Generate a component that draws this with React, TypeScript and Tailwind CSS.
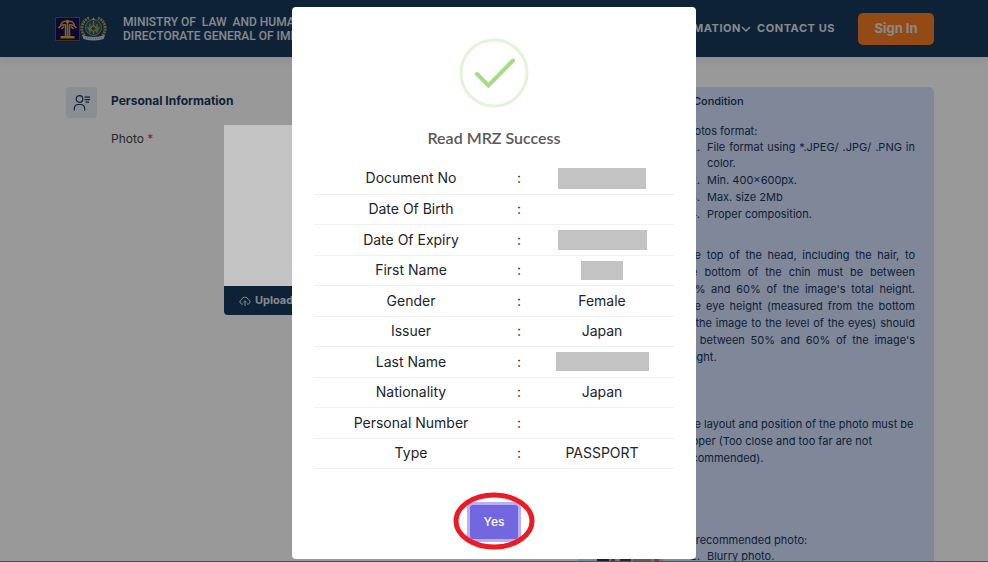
import type { ReactNode } from 'react';

interface MrzField {
  label: string;
  value?: string;
  // size classes of the grey block that hides a private value
  mask?: string;
}

const fields: MrzField[] = [
  { label: 'Document No', mask: 'h-[21px] w-[88px]' },
  { label: 'Date Of Birth' },
  { label: 'Date Of Expiry', mask: 'h-5 w-[89px]' },
  { label: 'First Name', mask: 'h-[19px] w-[42px]' },
  { label: 'Gender', value: 'Female' },
  { label: 'Issuer', value: 'Japan' },
  { label: 'Last Name', mask: 'h-[19px] w-[93px]' },
  { label: 'Nationality', value: 'Japan' },
  { label: 'Personal Number' },
  { label: 'Type', value: 'PASSPORT' },
];

function MinistryLogo() {
  return (
    <svg viewBox="0 0 25 24" className="h-6 w-[25px]" aria-hidden="true">
      <rect x="0.5" y="0.5" width="24" height="23" fill="#150c55" stroke="#6d4b3f" />
      <g fill="none" stroke="#d9a531" strokeWidth="1.5">
        <path d="M12.5 4v17M10.5 8v13M14.5 8v13" />
        <path d="M12.5 5C9 3 7 5 5.500 8M12.500 5c3.500-2 5.500 0 7 3" />
        <path d="M11 8C8 7 5.500 8.500 3.500 11M14 8c3-1 5.500.5 7.500 3" />
        <path d="M9 9.500 6.500 12M16 9.500l2.500 2.500" />
      </g>
      <circle cx="12.500" cy="4.500" r="1.700" fill="#d9a531" />
      <path d="M5.500 19h14v2.500h-14z" fill="#d9a531" />
    </svg>
  );
}

function ImmigrationLogo() {
  return (
    <svg viewBox="0 0 27 25" className="h-[25px] w-[27px]" aria-hidden="true">
      <path d="M9 2A11 11 0 0 0 5 20" fill="none" stroke="#b3953a" strokeWidth="3" strokeDasharray="2 0.7" />
      <path d="M18 2a11 11 0 0 1 4 18" fill="none" stroke="#b3953a" strokeWidth="3" strokeDasharray="2 0.7" />
      <circle cx="13.500" cy="11.500" r="8" fill="#27566b" stroke="#7f9794" />
      <path d="M13.500 1 15 4h-3z" fill="#e0bd4a" />
      <path d="M13.500 5v13M10 8v9M17 8v9M7.500 11l3 5M19.500 11l-3 5" stroke="#b39a41" strokeWidth="1.300" />
      <circle cx="13.500" cy="12.500" r="2.600" fill="#26536a" stroke="#d9b848" />
      <path d="M2 19q11.500 4 23 0l-1.500 4q-10 3-20 0z" fill="#c9d2d6" />
      <path d="M5 21.500q8.500 2.200 17 0" fill="none" stroke="#7a8790" strokeDasharray="1 1" />
    </svg>
  );
}

function Header() {
  return (
    <header className="flex h-[57px] items-center justify-between bg-[#16375d] pr-[54px] pl-[55px] shadow-[0_2px_10px_rgba(0,0,0,0.1)]">
      <div className="flex items-center">
        <MinistryLogo />
        <ImmigrationLogo />
        <p className="ml-4 font-['Roboto',sans-serif] text-[12px] leading-[14px] font-medium whitespace-pre text-[#e2e5e8]">
          {'MINISTRY OF  LAW  AND HUMAN RIGHTS\nDIRECTORATE GENERAL OF IMMIGRATION'}
        </p>
      </div>
      <nav className="flex items-center gap-1.5 text-[11px] font-bold tracking-wider text-[#e2e5e8]">
        <a href="#information" className="flex items-center">
          INFORMATION
          <svg viewBox="0 0 10 10" className="size-2.5" fill="none" stroke="currentColor" strokeWidth="1.500" aria-hidden="true">
            <path d="m1 3 4 4 4-4" />
          </svg>
        </a>
        <a href="#contact">CONTACT US</a>
        <button
          type="button"
          className="ml-[17px] h-8 w-[76px] rounded-[5px] bg-[#f57c22] text-[13px] tracking-normal"
        >
          Sign In
        </button>
      </nav>
    </header>
  );
}

interface RequirementProps {
  children: ReactNode;
  className?: string;
  sample?: ReactNode;
}

function Requirement({ children, className = '', sample }: RequirementProps) {
  return (
    <div className={`grid grid-cols-[84px_minmax(0,1fr)] ${className}`}>
      <div>{sample}</div>
      <div>{children}</div>
    </div>
  );
}

function BlurrySample() {
  return (
    <svg viewBox="0 0 66 40" className="mt-[27px] h-10 w-[66px]" aria-hidden="true">
      <path d="M0 0h66v40H0z" fill="#c9c6c8" />
      <path d="M0 0h12v20H0z" fill="#2f3440" />
      <path d="M14 0h4v20h-4z" fill="#a8433f" />
      <path d="M23 0h11v20H23z" fill="#3d4452" />
      <path d="M36 0h18v20H36z" fill="#a09793" />
      <path d="M57 0h5v20h-5z" fill="#c9694d" />
    </svg>
  );
}

function Conditions() {
  return (
    <aside className="h-[475px] w-[356px] shrink-0 overflow-hidden rounded-t-[5px] bg-[#d4e1ff] px-[19px] pt-1.5 text-[11px] text-[#16375d]">
      <h2 className="leading-[17px] font-medium">Photo Format and Condition</h2>
      <Requirement className="mt-[13px] h-[124px]">
        <p className="leading-4">Photos format:</p>
        <ol className="list-decimal space-y-px pl-[22px] text-justify leading-4">
          <li className="pl-1">File format using *.JPEG/ .JPG/ .PNG in color.</li>
          <li className="pl-1">Min. 400×600px.</li>
          <li className="pl-1">Max. size 2Mb</li>
          <li className="pl-1">Proper composition.</li>
        </ol>
      </Requirement>
      <Requirement className="h-[169px]">
        <p className="text-justify leading-[17px]">
          The top of the head, including the hair, to the&nbsp;bottom of the chin must be between 50%&nbsp;and
          60% of the image's total height. The&nbsp;eye height (measured from the bottom of&nbsp;the&nbsp;image
          to the level of the eyes) should be&nbsp;between 50% and 60% of the image's height.
        </p>
      </Requirement>
      <Requirement className="h-[116px]">
        <p className="leading-[17px]">
          The layout and position of the photo must be proper (Too close and too far are not recommended).
        </p>
      </Requirement>
      <Requirement sample={<BlurrySample />}>
        <p className="leading-4">Unrecommended photo:</p>
        <ol className="list-decimal pl-[22px] leading-4">
          <li className="pl-1">Blurry photo.</li>
        </ol>
      </Requirement>
    </aside>
  );
}

function PersonalInformation() {
  return (
    <section className="flex min-w-0 flex-1 gap-3.5">
      <div className="flex size-[31px] shrink-0 items-center justify-center rounded bg-[#e7ecf2]">
        <svg viewBox="0 0 18 18" className="size-[18px]" fill="none" stroke="#16375d" strokeWidth="1.200" aria-hidden="true">
          <circle cx="6.500" cy="5" r="3.300" />
          <path d="M1.300 16.500v-2.200a3.800 3.800 0 0 1 3.800-3.800h2.800a3.800 3.800 0 0 1 3.800 3.800v2.200" />
          <path d="M11.500 3.200H17M11.500 5.700H17M12.500 8.200H16" />
        </svg>
      </div>
      <div className="min-w-0 flex-1">
        <h1 className="mt-1.5 text-[12px] leading-4 font-bold text-[#16375d]">Personal Information</h1>
        <div className="mt-4 flex">
          <p className="mt-1.5 w-[113px] shrink-0 text-[12px] leading-4 text-[#444]">
            Photo <span className="text-[#f0364c]">*</span>
          </p>
          <div>
            <div className="relative z-20 h-[161px] w-[120px] bg-[#c3c3c3]" />
            <button
              type="button"
              className="flex h-[29px] w-[120px] items-center gap-1 rounded-b bg-[#16375d] pl-[15px] text-[11px] font-bold text-[#e2e5e8]"
            >
              <svg viewBox="0 0 12 12" className="size-3" fill="none" stroke="currentColor" aria-hidden="true">
                <path d="M4 9H2.800A2.200 2.200 0 0 1 2.500 4.700 3.500 3.500 0 0 1 9.200 4.500 2.300 2.300 0 0 1 9.200 9H8M6 11V6M4.300 7.500 6 5.800l1.700 1.700" />
              </svg>
              Upload
            </button>
          </div>
        </div>
      </div>
    </section>
  );
}

function SuccessDialog() {
  return (
    <div className="fixed inset-0 z-30 flex items-start justify-center pt-[7px]">
      <div
        role="dialog"
        aria-labelledby="dialog-title"
        className="flex w-[404px] flex-col items-center rounded bg-white px-[22px] pt-[31px] pb-5"
      >
        <svg viewBox="0 0 70 70" className="size-[70px]" fill="none" aria-hidden="true">
          <circle cx="35" cy="35" r="33" stroke="#e4f4da" strokeWidth="3" />
          <path d="m18 36 11.500 11.500L54 22.500" stroke="#a5dc86" strokeWidth="4" strokeLinecap="round" />
        </svg>
        <h2 id="dialog-title" className="mt-5 font-['Lato',sans-serif] text-[16px] leading-5 font-semibold text-[#595959]">
          Read MRZ Success
        </h2>
        <table className="mt-[15px] w-full table-fixed text-center text-[14px] leading-5 text-[#212529]">
          <colgroup>
            <col className="w-[194px]" />
            <col className="w-[22px]" />
            <col />
          </colgroup>
          <tbody>
            {fields.map((field) => (
              <tr key={field.label} className="h-[30px] border-b border-[#eff0f1] odd:h-[31px]">
                <th scope="row" className="p-0 font-normal">
                  {field.label}
                </th>
                <td className="p-0">:</td>
                <td className="p-0">
                  {field.mask ? <div className={`mx-auto bg-[#c3c3c3] ${field.mask}`} /> : field.value}
                </td>
              </tr>
            ))}
          </tbody>
        </table>
        <div className="relative mt-9">
          <button
            type="button"
            className="h-[34px] w-12 rounded-[3px] bg-[#7367df] text-[12px] font-medium text-white ring-3 ring-[#b8b0f0]"
          >
            Yes
          </button>
          {/* Hand-drawn highlight around the button */}
          <svg
            viewBox="0 0 82 58"
            className="pointer-events-none absolute top-1/2 left-1/2 h-[58px] w-[82px] -translate-x-1/2 -translate-y-1/2 overflow-visible"
            fill="none"
            aria-hidden="true"
          >
            <ellipse cx="41" cy="28" rx="38" ry="26" stroke="#ed1c24" strokeWidth="5" />
          </svg>
        </div>
      </div>
    </div>
  );
}

export default function App() {
  return (
    <div className="h-screen overflow-hidden border-b border-[#7c8ba0] bg-white font-['Inter',sans-serif]">
      <Header />
      <main className="flex justify-between pt-[30px] pr-[54px] pl-[66px]">
        <PersonalInformation />
        <Conditions />
      </main>
      <div className="fixed inset-0 z-10 bg-black/40" />
      <SuccessDialog />
    </div>
  );
}
